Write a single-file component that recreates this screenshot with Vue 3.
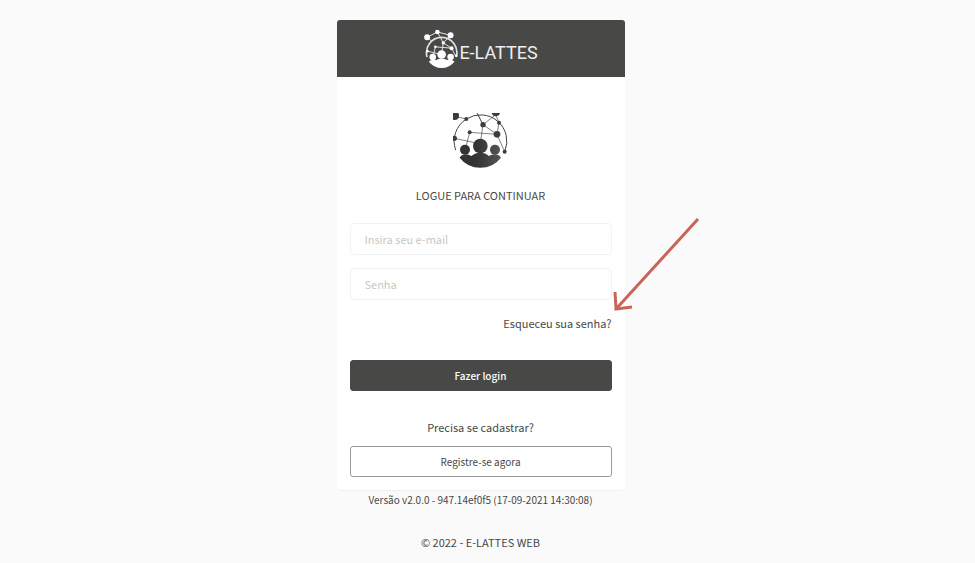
<script setup>
import { ref } from 'vue'

const email = ref('')
const password = ref('')

function handleLogin() {
  if (!email.value.trim() || !password.value) {
    return
  }

  password.value = ''
}
</script>

<template>
  <div class="page">
    <main class="card">
      <header class="card-header">
        <svg class="brand-icon" viewBox="24 22 108 124" aria-hidden="true">
          <g fill="none" stroke="#e4e4e4">
            <path d="M36 110 A46 46 0 1 1 124 110" stroke-width="5" />
            <path
              d="M36 50 L67 34 L107 44 L85 67 L67 34 M36 50 L50 62 M85 67 L110 83 L122 106 M85 67 L80 98 M61 79 L110 83 M61 79 L55 104 M37 92 L70 100"
              stroke-width="3"
            />
          </g>
          <g fill="#fff">
            <circle cx="36" cy="50" r="9" />
            <circle cx="67" cy="34" r="7" />
            <circle cx="107" cy="44" r="9" />
            <circle cx="85" cy="67" r="5" />
            <circle cx="61" cy="79" r="4" />
            <circle cx="110" cy="83" r="6" />
            <circle cx="37" cy="92" r="4" />
            <circle cx="124" cy="106" r="4" />
            <circle cx="80" cy="102" r="13" />
            <circle cx="53" cy="110" r="10" />
            <circle cx="107" cy="110" r="10" />
            <path d="M41 123 Q50 116 63 119 Q80 109 97 119 Q110 116 119 123 Q104 143 80 143 Q56 143 41 123 Z" />
          </g>
        </svg>
        <span class="brand-name">E-LATTES</span>
      </header>

      <form class="card-body" @submit.prevent="handleLogin">
        <svg class="logo" viewBox="39 39 165 165" aria-hidden="true">
          <defs>
            <linearGradient id="people" gradientUnits="userSpaceOnUse" x1="59" y1="0" x2="183" y2="0">
              <stop offset="0" stop-color="#333" />
              <stop offset="0.4" stop-color="#333" />
              <stop offset="1" stop-color="#555" />
            </linearGradient>
          </defs>
          <g fill="none" stroke="#444">
            <path d="M47 150 A79 79 0 0 1 79 57 A79 79 0 0 1 194 155" stroke-width="3" />
            <path
              d="M48 50 L79 57 M111 39 L129 74 L167 44 L177 68 M111 39 L129 74 L171 103 L177 68 M129 74 L121 130 M89 97 L171 103 L194 155 M89 97 L76 148 M43 115 L115 130"
              stroke-width="2"
            />
          </g>
          <g fill="#3c3c3c">
            <path d="M39 39 H55 Q60 49 54 56 Q48 62 39 59 Z" />
            <path d="M155 39 H180 Q177 49 167 49 Q158 49 155 39 Z" />
            <circle cx="79" cy="57" r="6" />
            <circle cx="129" cy="74" r="8" />
            <circle cx="177" cy="68" r="6" />
            <circle cx="89" cy="97" r="6" />
            <circle cx="171" cy="103" r="10" />
            <circle cx="43" cy="115" r="8" />
            <circle cx="194" cy="155" r="6" />
          </g>
          <g fill="url(#people)">
            <circle cx="121" cy="138" r="22" />
            <circle cx="75" cy="149" r="15" />
            <circle cx="165" cy="149" r="15" />
            <path d="M59 173 Q66 163 78 163 Q87 163 94 168 Q105 158 121 158 Q137 158 147 168 Q154 163 164 163 Q176 163 183 173 Q160 203 121 203 Q82 203 59 173 Z" />
          </g>
        </svg>

        <h1 class="title">LOGUE PARA CONTINUAR</h1>

        <input v-model="email" class="field" type="email" placeholder="Insira seu e-mail" aria-label="E-mail" />
        <input v-model="password" class="field" type="password" placeholder="Senha" aria-label="Senha" />

        <div class="forgot">
          <a href="#">Esqueceu sua senha?</a>
          <svg class="arrow" viewBox="0 0 90 98" aria-hidden="true">
            <path d="M86 4 L4 94 M3 77 L4 94 L20 92" fill="none" stroke="#c96558" stroke-width="3" />
          </svg>
        </div>

        <button class="button primary" type="submit">Fazer login</button>

        <p class="question">Precisa se cadastrar?</p>
        <button class="button outline" type="button">Registre-se agora</button>
      </form>
    </main>

    <p class="version">Versão v2.0.0 - 947.14ef0f5 (17-09-2021 14:30:08)</p>
    <footer class="footer">© 2022 - E-LATTES WEB</footer>
  </div>
</template>

<style>
body {
  margin: 0;
  background: #fafafa;
}
</style>

<style scoped>
.page {
  display: flex;
  flex-direction: column;
  align-items: center;
  padding: 20px 14px 10px 0;
  color: #484846;
  font-family: "Noto Sans CJK SC", "Open Sans", sans-serif;
  font-size: 11px;
  line-height: 18px;
}

.card {
  width: 100%;
  max-width: 288px;
  border-radius: 4px;
  background: #fff;
  box-shadow: 0 1px 1px rgba(0, 0, 0, 0.04);
}

.card-header {
  display: flex;
  align-items: center;
  justify-content: center;
  height: 57px;
  border-radius: 3px 3px 0 0;
  background: #484846;
}

.brand-icon {
  width: 36px;
  height: 41px;
}

.brand-name {
  padding-top: 8px;
  color: #eee;
  font-family: Roboto, sans-serif;
  font-size: 18px;
}

.card-body {
  display: flex;
  flex-direction: column;
  padding: 36px 13px 13px;
}

.logo {
  align-self: center;
  width: 55px;
  height: 55px;
}

.title {
  margin: 18px 0 19px;
  font-size: 11px;
  font-weight: 400;
  text-align: center;
}

.field {
  box-sizing: border-box;
  width: 100%;
  height: 32px;
  margin-bottom: 13px;
  padding: 0 14px;
  border: 1px solid #f2f2f2;
  border-radius: 4px;
  background: #fff;
  color: #484846;
  font: inherit;
}

.field::placeholder {
  color: #c8c8c8;
}

.forgot {
  position: relative;
  margin-top: 1px;
  text-align: right;
}

.forgot a {
  color: inherit;
  text-decoration: none;
}

.arrow {
  position: absolute;
  bottom: 19px;
  left: 100%;
  width: 90px;
  height: 98px;
  pointer-events: none;
}

.button {
  height: 31px;
  padding: 0 12px;
  border: 1px solid #484846;
  border-radius: 3px;
  font: inherit;
  font-size: 10px;
  cursor: pointer;
}

.primary {
  margin-top: 28px;
  background: #484846;
  color: #fff;
  font-weight: 500;
}

.question {
  margin: 27px 0 10px;
  text-align: center;
}

.outline {
  border-color: #999;
  background: #fff;
  color: #484846;
}

.version {
  margin: 1px 0 24px;
  font-size: 10px;
}

.footer {
  text-align: center;
}
</style>
